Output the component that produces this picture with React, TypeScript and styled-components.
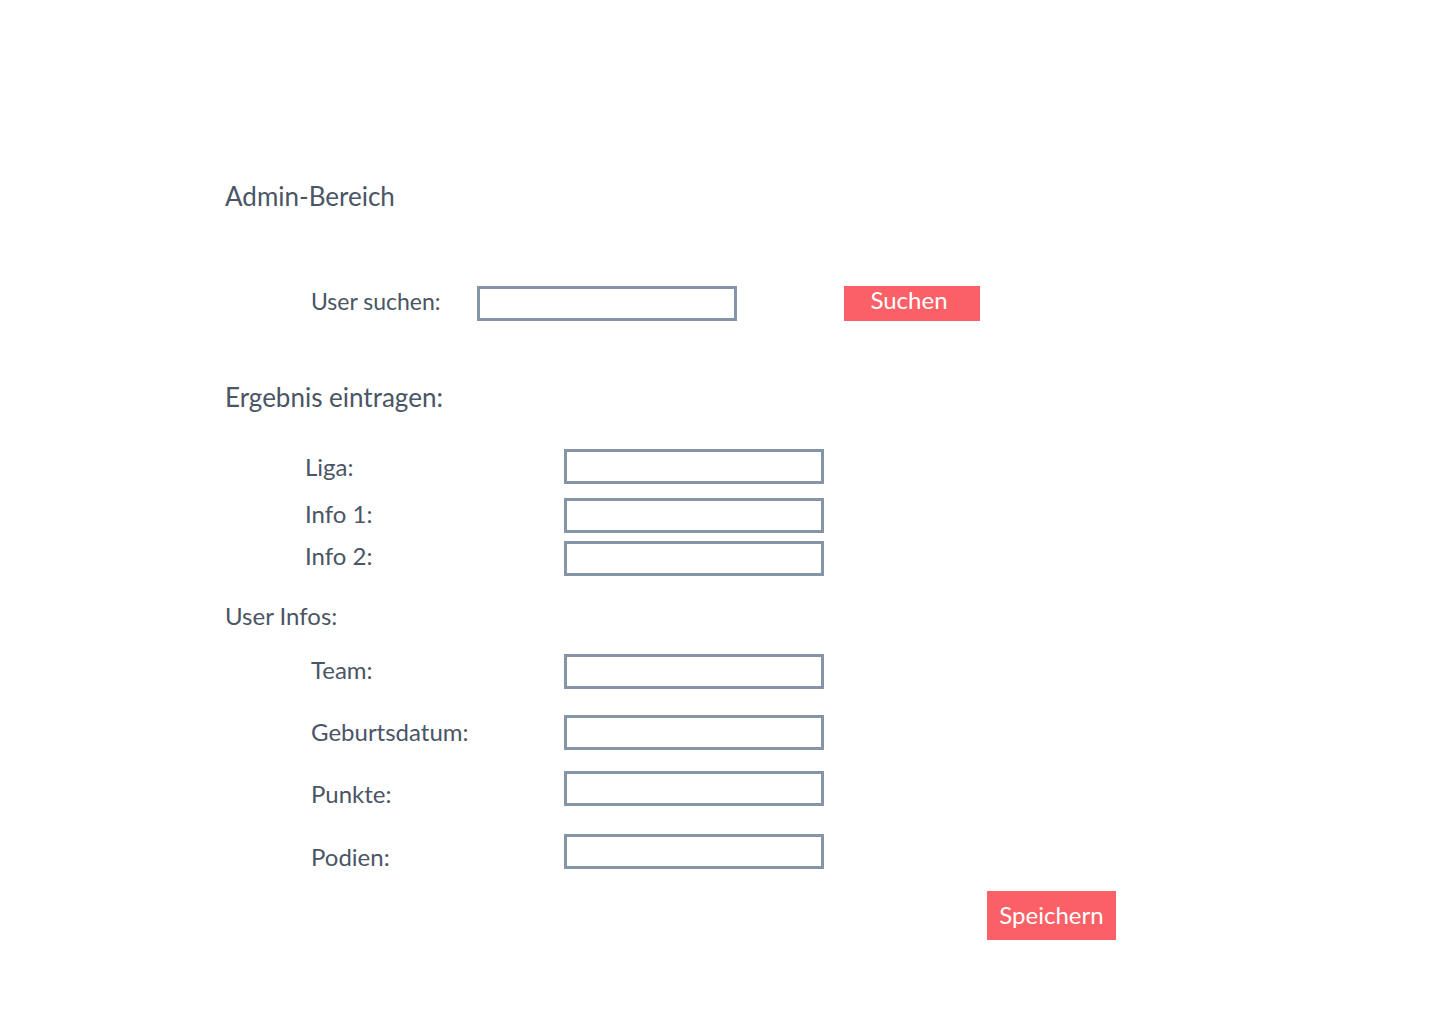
import React from "react";
import styled, { createGlobalStyle } from "styled-components";

const GlobalStyle = createGlobalStyle`
  html, body {
    margin: 0;
    padding: 0;
    background: #ffffff;
  }
  body {
    font-family: Lato, "Open Sans", "Liberation Sans", sans-serif;
    color: #4a5565;
  }
  * { box-sizing: border-box; }
`;

const Page = styled.main`
  display: flex;
  flex-direction: column;
  align-items: flex-start;
  padding: 181px 0 60px 225px;
  min-height: 1024px;
`;

const Heading = styled.h2<{ $size: number; $top: number }>`
  margin: ${(p) => p.$top}px 0 0;
  font-size: ${(p) => p.$size}px;
  line-height: 1.2;
  font-weight: 400;
  color: #4a5565;
`;

const Row = styled.div<{ $top: number; $indent: number }>`
  display: flex;
  align-items: flex-start;
  height: 35px;
  margin-top: ${(p) => p.$top}px;
  padding-left: ${(p) => p.$indent}px;
`;

const Label = styled.label<{ $width: number; $drop: number; $size?: number }>`
  width: ${(p) => p.$width}px;
  margin-top: ${(p) => p.$drop}px;
  font-size: ${(p) => p.$size ?? 24}px;
  line-height: 1.2;
  color: #4a5565;
  flex-shrink: 0;
`;

const Field = styled.input`
  width: 260px;
  height: 35px;
  border: 3px solid #8694a7;
  border-radius: 0;
  background: #ffffff;
  padding: 0 8px;
  font: inherit;
  font-size: 18px;
  outline: none;
  flex-shrink: 0;
`;

const Button = styled.button<{ $w: number; $h: number; $size: number; $shiftX?: number; $lift?: number }>`
  width: ${(p) => p.$w}px;
  height: ${(p) => p.$h}px;
  background: #fb6066;
  color: #ffffff;
  border: none;
  border-radius: 0;
  padding: 0 ${(p) => p.$shiftX ?? 0}px ${(p) => p.$lift ?? 0}px 0;
  font-family: Lato, "Open Sans", "Liberation Sans", sans-serif;
  font-size: ${(p) => p.$size}px;
  line-height: 1.2;
  cursor: pointer;
  flex-shrink: 0;
`;

const SearchButton = styled(Button)`
  margin-left: 107px;
`;

const SaveButton = styled(Button)`
  margin-top: 22px;
  margin-left: 762px;
`;

type FieldDef = { label: string; top: number; drop: number };

const resultFields: FieldDef[] = [
  { label: "Liga:", top: 36, drop: 4 },
  { label: "Info 1:", top: 14, drop: 2 },
  { label: "Info 2:", top: 8, drop: 1.5 },
];

const userFields: FieldDef[] = [
  { label: "Team:", top: 23.6, drop: 1.6 },
  { label: "Geburtsdatum:", top: 26, drop: 2.6 },
  { label: "Punkte:", top: 21, drop: 9 },
  { label: "Podien:", top: 28, drop: 8.6 },
];

export default function App() {
  return (
    <>
      <GlobalStyle />
      <Page>
        <Heading $size={26} $top={0}>Admin-Bereich</Heading>

        <Row $top={73.8} $indent={86}>
          <Label $width={166} $drop={1.6} $size={23}>User suchen:</Label>
          <Field type="text" />
          <SearchButton $w={136} $h={35} $size={24} $shiftX={6} $lift={7}>Suchen</SearchButton>
        </Row>

        <Heading $size={26} $top={60.8}>Ergebnis eintragen:</Heading>

        {resultFields.map((f) => (
          <Row key={f.label} $top={f.top} $indent={80}>
            <Label $width={259} $drop={f.drop}>{f.label}</Label>
            <Field type="text" />
          </Row>
        ))}

        <Heading $size={24} $top={25.6}>User Infos:</Heading>

        {userFields.map((f) => (
          <Row key={f.label} $top={f.top} $indent={86}>
            <Label $width={253} $drop={f.drop}>{f.label}</Label>
            <Field type="text" />
          </Row>
        ))}

        <SaveButton $w={129} $h={49} $size={24}>Speichern</SaveButton>
      </Page>
    </>
  );
}
